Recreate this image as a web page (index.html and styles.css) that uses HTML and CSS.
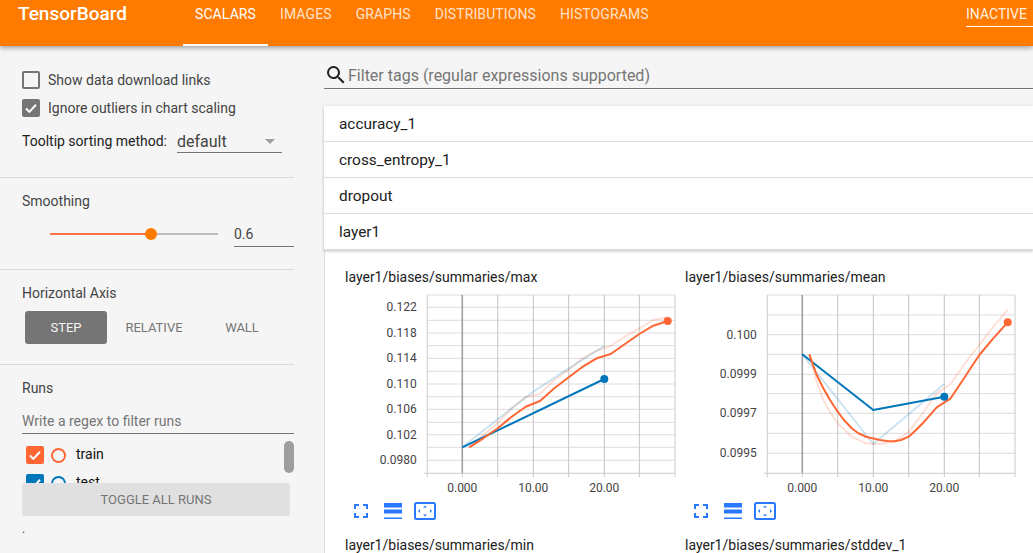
FILE: index.html
```html
<!DOCTYPE html>
<html lang="en">
<head>
    <meta charset="UTF-8">
    <title>TensorBoard</title>
    <link rel="stylesheet" href="styles.css">
</head>
<body>
    <header class="topbar">
        <div class="brand">TensorBoard</div>
        <nav class="tabs">
            <a class="tab active">Scalars</a>
            <a class="tab">Images</a>
            <a class="tab">Graphs</a>
            <a class="tab">Distributions</a>
            <a class="tab">Histograms</a>
        </nav>
        <div class="inactive">Inactive</div>
    </header>

    <div class="page">
        <aside class="sidebar">
            <section class="panel panel-options">
                <label class="check-row"><span class="box"></span>Show data download links</label>
                <label class="check-row"><span class="box checked">
                    <svg viewBox="0 0 18 18"><path d="M4 9.5l3.4 3.4L14 5.8" /></svg>
                </span>Ignore outliers in chart scaling</label>
                <div class="sort-row">
                    <span>Tooltip sorting method:</span>
                    <div class="select">default<span class="caret"></span></div>
                </div>
            </section>

            <section class="panel panel-smoothing">
                <h3>Smoothing</h3>
                <div class="slider-row">
                    <div class="slider">
                        <div class="slider-fill"></div>
                        <div class="slider-thumb"></div>
                    </div>
                    <div class="slider-value">0.6</div>
                </div>
            </section>

            <section class="panel panel-axis">
                <h3>Horizontal Axis</h3>
                <div class="axis-buttons">
                    <button class="axis-btn on">Step</button>
                    <button class="axis-btn">Relative</button>
                    <button class="axis-btn">Wall</button>
                </div>
            </section>

            <section class="panel panel-runs">
                <h3>Runs</h3>
                <div class="runs-filter">Write a regex to filter runs</div>
                <div class="runs-list">
                    <div class="run">
                        <span class="box checked train"><svg viewBox="0 0 18 18"><path d="M4 9.5l3.4 3.4L14 5.8" /></svg></span>
                        <span class="radio train"></span><span class="run-name">train</span>
                    </div>
                    <div class="run">
                        <span class="box checked test"><svg viewBox="0 0 18 18"><path d="M4 9.5l3.4 3.4L14 5.8" /></svg></span>
                        <span class="radio test"></span><span class="run-name">test</span>
                    </div>
                    <div class="scroll-thumb"></div>
                </div>
                <button class="toggle-runs">Toggle all runs</button>
                <div class="dot-path">.</div>
            </section>
        </aside>

        <main class="content">
            <div class="tag-filter">
                <svg class="search-icon" viewBox="0 0 24 24"><path d="M15.5 14h-.79l-.28-.27A6.47 6.47 0 0 0 16 9.5 6.5 6.5 0 1 0 9.5 16c1.61 0 3.09-.59 4.23-1.57l.27.28v.79l5 4.99L20.49 19l-4.99-5zm-6 0C7.01 14 5 11.99 5 9.5S7.01 5 9.5 5 14 7.01 14 9.5 11.99 14 9.5 14z" /></svg>
                <span>Filter tags (regular expressions supported)</span>
            </div>

            <div class="categories">
                <div class="category">accuracy_1</div>
                <div class="category">cross_entropy_1</div>
                <div class="category">dropout</div>
                <div class="category">layer1</div>
            </div>

            <div class="charts">
                <div class="card">
                    <div class="card-title">layer1/biases/summaries/max</div>
                    <svg class="plot" viewBox="0 0 340 210">
                        <path class="grid" d="M87.3 5H335M87.3 17.3H335M87.3 30.3H335M87.3 43H335M87.3 55.7H335M87.3 68.3H335M87.3 81.3H335M87.3 94H335M87.3 106.7H335M87.3 119.3H335M87.3 132.3H335M87.3 144.7H335M87.3 157.3H335M87.3 170.3H335" />
                        <path class="grid-v" d="M157.7 5V187M193.3 5V187M228.7 5V187M264.3 5V187M299.3 5V187" />
                        <path class="axis" d="M84 183.3H335M87.3 5V187M335 5V187M122.3 183V187" />
                        <path class="zero" d="M122.3 5V183" />
                        <text class="tick-y" x="76.7" y="21.3">0.122</text>
                        <text class="tick-y" x="76.7" y="47">0.118</text>
                        <text class="tick-y" x="76.7" y="72.3">0.114</text>
                        <text class="tick-y" x="76.7" y="98">0.110</text>
                        <text class="tick-y" x="76.7" y="123.3">0.106</text>
                        <text class="tick-y" x="76.7" y="148.7">0.102</text>
                        <text class="tick-y" x="76.7" y="174.3">0.0980</text>
                        <text class="tick-x" x="122.3" y="202">0.000</text>
                        <text class="tick-x" x="193.3" y="202">10.00</text>
                        <text class="tick-x" x="264.3" y="202">20.00</text>
                        <polyline class="line faded orange" points="129.3,157.3 143.3,145 157.7,133.3 171.7,118.3 185.7,106.7 200,104 214.3,90 228.7,80 242.7,68.3 256.7,60.7 270.7,56 285,46.7 299.3,38.3 313.3,30 327.7,27.3" />
                        <polyline class="line faded blue" points="122.3,157.3 157.7,129.3 193.3,101.7 228.7,78.3 264.3,56" />
                        <polyline class="line blue" points="122.3,157.3 264.3,89" />
                        <polyline class="line orange" points="129.3,157.3 143.3,148.3 157.7,138.3 171.7,126.7 185.7,116.7 200,111 214.3,98.3 228.7,87.3 242.7,76.7 256.7,68.3 270.7,64 285,54 299.3,44 313.3,35.7 327.7,31" />
                        <circle class="pt-blue" cx="264.3" cy="89" r="4" />
                        <circle class="pt-orange" cx="327.7" cy="31" r="4" />
                    </svg>
                    <div class="card-tools">
                        <svg class="tool-full" viewBox="0 0 14 14"><path d="M0 5V0h5v2H2v3zM9 0h5v5h-2V2H9zM14 9v5H9v-2h3V9zM5 14H0V9h2v3h3z" /></svg>
                        <svg class="tool-lines" viewBox="0 0 18 16"><path d="M0 0h18v4.500H0zM0 6.500h18v4H0zM0 14.500h18V16H0z" /></svg>
                        <svg class="tool-fit" viewBox="0 0 22 18"><rect class="fit-frame" x="1" y="1" width="20" height="16" rx="1.500" /><path d="M11 3.500l2 2H9zM11 14.500l-2-2h4zM4 9l2-2v4zM18 9l-2 2V7z" /></svg>
                    </div>
                </div>

                <div class="card">
                    <div class="card-title">layer1/biases/summaries/mean</div>
                    <svg class="plot" viewBox="0 0 340 210">
                        <path class="grid" d="M87.3 5H335M87.3 25H335M87.3 44.700H335M87.3 64.300H335M87.3 84.300H335M87.3 103.700H335M87.3 123.300H335M87.3 143.300H335M87.3 163.300H335" />
                        <path class="grid-v" d="M157.7 5V187M193.3 5V187M228.7 5V187M264.3 5V187M299.3 5V187" />
                        <path class="axis" d="M84 183.3H335M87.3 5V187M335 5V187M122.3 183V187" />
                        <path class="zero" d="M122.3 5V183" />
                        <text class="tick-y" x="76.7" y="48.700">0.100</text>
                        <text class="tick-y" x="76.7" y="88.300">0.0999</text>
                        <text class="tick-y" x="76.7" y="127.300">0.0997</text>
                        <text class="tick-y" x="76.7" y="167.300">0.0995</text>
                        <text class="tick-x" x="122.3" y="202">0.000</text>
                        <text class="tick-x" x="193.3" y="202">10.00</text>
                        <text class="tick-x" x="264.3" y="202">20.00</text>
                        <polyline class="line faded blue" points="122.3,64.3 193.3,154 264.3,94" />
                        <polyline class="line faded orange" points="129.3,64.3 136.7,91.7 143.3,110 150,122 157.7,133.3 171.7,146.7 185.7,153.3 200,154 214.3,151.7 228.7,141.7 242.7,123.3 256.7,103.3 270.7,94 285,73.3 299.3,55 313.3,36.7 327.7,20" />
                        <polyline class="line blue" points="122.3,64.3 193.3,120 264.3,106.7" />
                        <polyline class="line orange" points="129.3,64.3 136.7,85 143.3,98.3 150,110 157.7,121.7 164,130 171.7,138.300 178,143 185.7,146.7 200,150 207,151 214.3,151.3 221,150 228.7,146.7 236,140 242.7,133.3 256.7,117.3 270.7,108.3 285,86.7 299.3,65 313.3,48.3 327.7,32.3" />
                        <circle class="pt-blue" cx="264.3" cy="106.7" r="4" />
                        <circle class="pt-orange" cx="327.7" cy="32.3" r="4" />
                    </svg>
                    <div class="card-tools">
                        <svg class="tool-full" viewBox="0 0 14 14"><path d="M0 5V0h5v2H2v3zM9 0h5v5h-2V2H9zM14 9v5H9v-2h3V9zM5 14H0V9h2v3h3z" /></svg>
                        <svg class="tool-lines" viewBox="0 0 18 16"><path d="M0 0h18v4.500H0zM0 6.500h18v4H0zM0 14.500h18V16H0z" /></svg>
                        <svg class="tool-fit" viewBox="0 0 22 18"><rect class="fit-frame" x="1" y="1" width="20" height="16" rx="1.500" /><path d="M11 3.500l2 2H9zM11 14.500l-2-2h4zM4 9l2-2v4zM18 9l-2 2V7z" /></svg>
                    </div>
                </div>

                <div class="card card-stub">
                    <div class="card-title">layer1/biases/summaries/min</div>
                </div>
                <div class="card card-stub">
                    <div class="card-title">layer1/biases/summaries/stddev_1</div>
                </div>
            </div>
        </main>
    </div>
</body>
</html>
```

FILE: styles.css
```css
* {
    box-sizing: border-box;
}
html, body {
    height: 100%;
}
body {
    margin: 0;
    overflow: hidden;
    font-family: 'Roboto', sans-serif;
    font-size: 14px;
    color: #212121;
    background-color: #f5f5f5;
}

/* top bar */
.topbar {
    position: relative;
    z-index: 2;
    display: flex;
    height: 46px;
    background-color: #ff7b00;
    color: #fff;
    box-shadow: 0 2px 5px rgba(0, 0, 0, 0.35);
}
.brand {
    width: 183px;
    padding: 2px 0 0 18px;
    font-size: 19px;
    line-height: 24px;
    font-weight: 500;
}
.tabs {
    display: flex;
}
.tab {
    height: 46px;
    padding: 6px 12px 0;
    line-height: 16px;
    letter-spacing: 0.1px;
    text-transform: uppercase;
    color: rgba(255, 255, 255, 0.8);
}
.tab.active {
    color: #fff;
    border-bottom: 2px solid #fff;
}
.inactive {
    margin-left: auto;
    width: 67px;
    height: 27px;
    padding-top: 6px;
    line-height: 16px;
    text-transform: uppercase;
    color: rgba(255, 255, 255, 0.9);
    border-bottom: 1px solid #fff;
}

.page {
    display: flex;
    height: 507px;
}

/* sidebar */
.sidebar {
    flex: none;
    width: 294px;
    margin-right: 30px;
}
.panel {
    border-bottom: 1px solid #d9d9d9;
}
.panel h3 {
    margin: 0;
    font-size: 14px;
    font-weight: 400;
    line-height: 18px;
    color: #444;
}
.panel-options {
    height: 132px;
    padding: 25px 12px 0 22px;
}
.panel-smoothing {
    height: 92px;
    padding: 14px 0 0 22px;
}
.panel-axis {
    height: 95px;
    padding: 14px 0 0 22px;
}
.panel-runs {
    border-bottom: 0;
    padding: 14px 0 0 22px;
}

.check-row {
    display: flex;
    align-items: center;
    height: 18px;
    margin-bottom: 10px;
    color: #444;
}
.box {
    display: block;
    flex: none;
    width: 18px;
    height: 18px;
    margin-right: 8px;
    border: 2px solid #757575;
    border-radius: 2px;
}
.box svg {
    display: block;
    width: 18px;
    height: 18px;
    margin: -2px;
    fill: none;
    stroke: #fff;
    stroke-width: 2;
}
.box.checked {
    background-color: #757575;
}
.sort-row {
    display: flex;
    align-items: center;
    margin-top: 14px;
    height: 20px;
    color: #212121;
}
.select {
    position: relative;
    width: 105px;
    height: 24px;
    margin: 0 0 0 10px;
    padding-top: 3px;
    border-bottom: 1px solid #757575;
    font-size: 16px;
    line-height: 20px;
    color: #444;
}
.caret {
    position: absolute;
    right: 7px;
    top: 10px;
    border-left: 5px solid transparent;
    border-right: 5px solid transparent;
    border-top: 5px solid #9e9e9e;
}

.slider-row {
    display: flex;
    align-items: flex-start;
    margin-top: 9px;
}
.slider {
    position: relative;
    width: 168px;
    height: 2px;
    margin: 14px 16px 0 28px;
    background-color: #bdbdbd;
}
.slider-fill {
    width: 101px;
    height: 2px;
    background-color: #ff7043;
}
.slider-thumb {
    position: absolute;
    left: 95px;
    top: -5px;
    width: 12px;
    height: 12px;
    border-radius: 50%;
    background-color: #ff7b00;
}
.slider-value {
    width: 60px;
    height: 28px;
    padding-top: 6px;
    line-height: 18px;
    border-bottom: 1px solid #757575;
    color: #444;
}

.axis-buttons {
    display: flex;
    margin: 9px 0 0 3px;
}
.axis-btn {
    width: 82px;
    height: 33px;
    margin-right: 6px;
    padding: 0;
    border: 0;
    border-radius: 3px;
    background: none;
    font: inherit;
    font-size: 13px;
    text-transform: uppercase;
    color: #757575;
}
.axis-btn.on {
    background-color: #757575;
    color: #f5f5f5;
}

.runs-filter {
    height: 22px;
    margin-top: 15px;
    line-height: 18px;
    color: #757575;
    border-bottom: 1px solid #757575;
}
.runs-list {
    position: relative;
    height: 49px;
    padding: 12px 0 0 4px;
    overflow: hidden;
}
.run {
    display: flex;
    align-items: center;
    height: 18px;
    margin-bottom: 10px;
    color: #111;
}
.run-name {
    padding-bottom: 2px;
}
.box.train {
    background-color: #ff6633;
    border-color: #ff6633;
}
.box.test {
    background-color: #0077bb;
    border-color: #0077bb;
}
.box.train, .box.test {
    margin-right: 7px;
}
.radio {
    flex: none;
    width: 15px;
    height: 15px;
    margin-right: 10px;
    border: 2px solid;
    border-radius: 50%;
}
.radio.train {
    border-color: #ff6633;
}
.radio.test {
    border-color: #0077bb;
}
.scroll-thumb {
    position: absolute;
    right: 0;
    top: 7px;
    width: 10px;
    height: 32px;
    border-radius: 5px;
    background-color: #9e9e9e;
}
.toggle-runs {
    display: block;
    width: 268px;
    height: 33px;
    margin-top: 0;
    padding: 0;
    border: 0;
    border-radius: 3px;
    background-color: #e0e0e0;
    font: inherit;
    font-size: 13px;
    text-transform: uppercase;
    color: #757575;
}
.dot-path {
    margin-top: 6px;
    font-size: 12px;
    color: #444;
}

/* main area */
.content {
    flex: 1;
    min-width: 0;
}
.tag-filter {
    display: flex;
    align-items: center;
    height: 43px;
    padding-top: 16px;
    border-bottom: 1px solid #757575;
    font-size: 16px;
    color: #757575;
}
.search-icon {
    flex: none;
    width: 24px;
    height: 24px;
    margin-right: 0;
    fill: #212121;
}
.categories {
    position: relative;
    margin-top: 17px;
    box-shadow: 0 1px 3px rgba(0, 0, 0, 0.25);
}
.category {
    height: 36px;
    padding: 0 15px;
    line-height: 36px;
    font-size: 15.4px;
    background-color: #fff;
    border-bottom: 1px solid #ddd;
}
.charts {
    display: grid;
    grid-template-columns: repeat(2, 340px);
    height: 303px;
    padding: 17px 0 0 15px;
    background-color: #fff;
    border-left: 1px solid #ddd;
}
.card {
    height: 268px;
}
.card-stub {
    height: 18px;
}
.card-title {
    padding-left: 5px;
    line-height: 20px;
    color: #212121;
}
.plot {
    display: block;
    width: 340px;
    height: 210px;
    margin-top: 3px;
}
.grid {
    fill: none;
    stroke: #ddd;
    stroke-width: 1;
}
.grid-v {
    fill: none;
    stroke: #c4c4c4;
    stroke-width: 1;
}
.axis {
    fill: none;
    stroke: #ccc;
    stroke-width: 1;
}
.zero {
    fill: none;
    stroke: #999;
    stroke-width: 1.5;
}
.tick-y, .tick-x {
    font-size: 12px;
    fill: #444;
}
.tick-y {
    text-anchor: end;
}
.tick-x {
    text-anchor: middle;
}
.line {
    fill: none;
    stroke-width: 2;
    stroke-linejoin: round;
}
.line.blue {
    stroke: #0077bb;
}
.line.orange {
    stroke: #ff6633;
}
.line.faded {
    opacity: 0.2;
}
.pt-blue {
    fill: #0077bb;
}
.pt-orange {
    fill: #ff6633;
}
.card-tools {
    display: flex;
    align-items: center;
    padding-left: 14px;
    height: 22px;
    margin-top: 0;
}
.card-tools svg {
    display: block;
    fill: #2979ff;
}
.tool-full {
    width: 14px;
    height: 14px;
    margin-right: 16px;
}
.tool-lines {
    width: 18px;
    height: 16px;
    margin-right: 12px;
}
.tool-fit {
    width: 22px;
    height: 18px;
}
.fit-frame {
    fill: none;
    stroke: #2979ff;
    stroke-width: 2;
}
```
